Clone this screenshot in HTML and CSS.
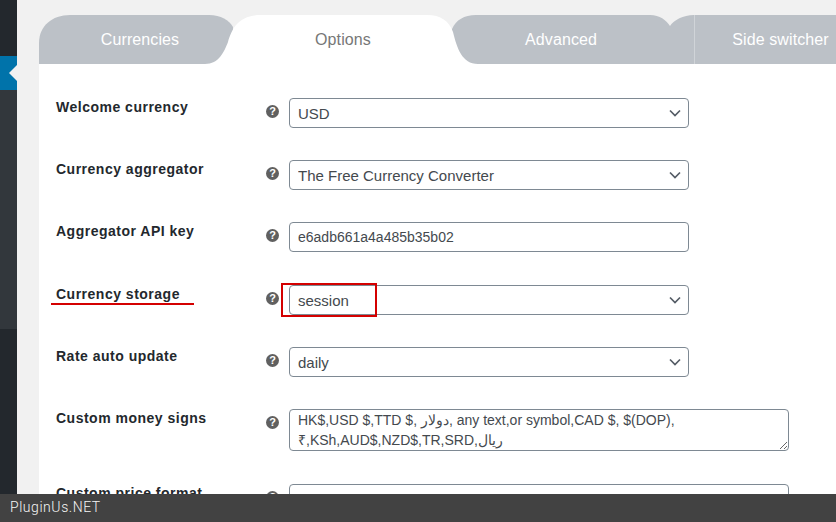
FILE: index.html
```html
<!DOCTYPE html>
<html lang="en">
<head>
    <meta charset="UTF-8">
    <meta name="viewport" content="width=device-width, initial-scale=1.0">
    <title>Currency options</title>
    <link rel="stylesheet" href="styles.css">
</head>
<body>
    <div class="sidebar">
        <div class="side-top"></div>
        <div class="side-active"><span class="side-arrow"></span></div>
        <div class="side-sub"></div>
        <div class="side-rest"></div>
    </div>

    <div class="content">
        <div class="tabs">
            <div class="tab tab-currencies">
                <svg class="tab-bg" viewBox="0 0 194 49" preserveAspectRatio="none"><path d="M0 49V28C0 11 13 0 31 0H170C182 0 190 5 194 12V49Z"/></svg>
                <span class="tab-label">Currencies</span>
            </div>
            <div class="tab tab-options">
                <svg class="tab-bg" viewBox="0 0 273 49" preserveAspectRatio="none"><path d="M0 49C14 49 19 37 23 27C27 13 34 0 56 0H222C236 0 244 6 248 17C252 33 257 49 273 49Z"/></svg>
                <span class="tab-label">Options</span>
            </div>
            <div class="tab tab-advanced">
                <svg class="tab-bg" viewBox="0 0 242 49" preserveAspectRatio="none"><path d="M0 49V14C4 5 12 0 24 0H198C208 0 214 5 218 11C222 5 231 0 242 0V49Z"/></svg>
                <span class="tab-label">Advanced</span>
            </div>
            <div class="tab tab-side">
                <span class="tab-label">Side switcher</span>
            </div>
        </div>

        <div class="panel">
            <div class="row">
                <label class="row-label">Welcome currency</label>
                <span class="help">?</span>
                <select class="field"><option>USD</option></select>
            </div>
            <div class="row">
                <label class="row-label">Currency aggregator</label>
                <span class="help">?</span>
                <select class="field"><option>The Free Currency Converter</option></select>
            </div>
            <div class="row row-tall">
                <label class="row-label">Aggregator API key</label>
                <span class="help">?</span>
                <input class="field" type="text" value="e6adb661a4a485b35b02">
            </div>
            <div class="row">
                <label class="row-label">Currency storage</label>
                <span class="help">?</span>
                <select class="field"><option>session</option></select>
                <span class="mark-line"></span>
                <span class="mark-box"></span>
            </div>
            <div class="row">
                <label class="row-label">Rate auto update</label>
                <span class="help">?</span>
                <select class="field"><option>daily</option></select>
            </div>
            <div class="row row-tall">
                <label class="row-label">Custom money signs</label>
                <span class="help">?</span>
                <textarea class="field field-wide">HK$,USD $,TTD $, دولار, any text,or symbol,CAD $, $(DOP), ₹,KSh,AUD$,NZD$,TR,SRD,ریال</textarea>
            </div>
            <div class="row row-last">
                <label class="row-label">Custom price format</label>
                <span class="help">?</span>
                <input class="field field-wide" type="text">
            </div>
        </div>
    </div>

    <div class="footer-bar">PluginUs.NET</div>
</body>
</html>
```

FILE: styles.css
```css
html, body {
    height: 522px;
    overflow: hidden;
}
body {
    font-family: "Liberation Sans", Arial, sans-serif;
    margin: 0;
    background-color: #f1f1f1;
    display: flex;
}
.sidebar {
    width: 17px;
    flex: none;
    display: flex;
    flex-direction: column;
}
.side-top {
    height: 56px;
    background-color: #23282d;
}
.side-active {
    height: 34px;
    background-color: #0073aa;
    display: flex;
    justify-content: flex-end;
    align-items: center;
}
.side-arrow {
    border: 8px solid transparent;
    border-right-color: #f1f1f1;
    border-left-width: 0;
}
.side-sub {
    height: 239px;
    background-color: #32373c;
}
.side-rest {
    flex: 1;
    background-color: #23282d;
}
.content {
    flex: 1;
    min-width: 0;
    padding: 15px 0 0 22px;
    overflow: hidden;
}
.tabs {
    display: flex;
    height: 49px;
}
.tab {
    position: relative;
    flex: none;
    height: 49px;
    line-height: 49px;
    font-size: 16px;
    letter-spacing: 0.1px;
    color: #fff;
    text-align: center;
    box-sizing: border-box;
}
.tab-bg {
    position: absolute;
    left: 0;
    top: 0;
    width: 100%;
    height: 100%;
    fill: #bcc1c7;
}
.tab-label {
    position: relative;
}
.tab-currencies {
    width: 194px;
    padding-left: 8px;
}
.tab-options {
    width: 273px;
    margin-left: -28px;
    padding-left: 3px;
    color: #777;
    z-index: 2;
}
.tab-options .tab-bg {
    fill: #fff;
}
.tab-advanced {
    width: 242px;
    margin-left: -26px;
    padding-right: 24px;
}
.tab-side {
    width: 172px;
    background-color: #bcc1c7;
    border-left: 1px solid #d0d4d8;
}
.panel {
    background-color: white;
    padding: 34px 0 0 17px;
    height: 424px;
    overflow: hidden;
}
.row {
    position: relative;
    display: grid;
    grid-template-columns: 210px 23px 1fr;
    margin-bottom: 32px;
}
.row-tall {
    margin-bottom: 33px;
}
.row-last {
    margin-bottom: 0;
}
.row-label {
    font-size: 14px;
    font-weight: bold;
    line-height: 18px;
    color: #23282d;
    letter-spacing: 0.5px;
}
.help {
    width: 13px;
    height: 13px;
    margin-top: 7px;
    border-radius: 50%;
    background-color: #606060;
    color: white;
    font-size: 11px;
    font-weight: bold;
    line-height: 13px;
    text-align: center;
}
.field {
    display: block;
    box-sizing: border-box;
    width: 400px;
    height: 30px;
    margin: 0;
    padding: 0 24px 0 8px;
    border: 1px solid #7e8993;
    border-radius: 4px;
    background-color: white;
    font-family: "Liberation Sans", Arial, sans-serif;
    font-size: 14px;
    color: #44494e;
}
select.field {
    appearance: none;
    font-size: 15px;
    background-image: url('data:image/svg+xml;utf8,<svg xmlns="http://www.w3.org/2000/svg" width="12" height="8" viewBox="0 0 12 8"><path d="M1 1.5l5 5 5-5" fill="none" stroke="%23555d66" stroke-width="1.7"/></svg>');
    background-repeat: no-repeat;
    background-position: right 7px center;
}
.field-wide {
    width: 500px;
}
textarea.field {
    height: 42px;
    padding: 0 8px;
    line-height: 20px;
}
.mark-line {
    position: absolute;
    left: -5px;
    top: 18px;
    width: 143px;
    height: 2px;
    background-color: #d40000;
}
.mark-box {
    position: absolute;
    left: 225px;
    top: -2px;
    width: 92px;
    height: 30px;
    border: 2px solid #d40000;
}
.footer-bar {
    position: fixed;
    left: 0;
    right: 0;
    bottom: 0;
    height: 28px;
    padding-left: 10px;
    background-color: #424242;
    color: #f5f5f5;
    font-family: Roboto, sans-serif;
    font-weight: 300;
    font-size: 14px;
    line-height: 27px;
    letter-spacing: 0.55px;
}
```
